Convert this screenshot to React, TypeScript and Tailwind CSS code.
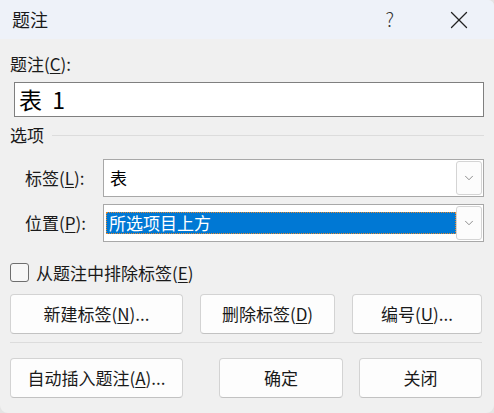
import { ChevronDown, X } from "lucide-react"

const font = { fontFamily: '"Noto Sans CJK SC", "Noto Sans", sans-serif' }

function Btn({ children, className }: { children: React.ReactNode; className: string }) {
    return (
        <button className={`h-[40px] flex items-center justify-center bg-[#fdfdfd] border border-[#d3d3d3] border-b-[#c2c2c2] rounded-[4px] text-[17px] text-[#1a1a1a] ${className}`}>
            {children}
        </button>
    )
}

function Combo({ value, selected }: { value: string; selected?: boolean }) {
    return (
        <div className="w-[381px] h-[38px] bg-white border border-[#a8a8a8] flex items-stretch p-[1px]">
            <div className="flex-1 flex items-center py-[6px] pl-[1px]">
                {selected ? (
                    <div className="w-full h-full bg-[#0078d4] text-white text-[17px] flex items-center pl-[3px] outline-1 outline-dotted outline-[#e88a2c] -outline-offset-1">
                        {value}
                    </div>
                ) : (
                    <span className="pl-[4px] text-[17px] text-black">{value}</span>
                )}
            </div>
            <div className="w-[26px] border border-[#d4d4d4] rounded-[3px] bg-[#fcfcfc] flex items-center justify-center">
                <ChevronDown className="w-[14px] h-[14px] text-[#6b6b6b]" strokeWidth={1.3} />
            </div>
        </div>
    )
}

export default function App() {
    return (
        <div className="w-[494px] h-[413px] bg-[#e4e4e4]" style={font}>
            <div className="w-full h-full rounded-b-[8px] rounded-tr-[6px] overflow-hidden bg-[#f0f0f0] flex flex-col">
                {/* title bar */}
                <div className="h-[39px] bg-[#eef2f9] flex items-center pl-[12px] shrink-0">
                    <span className="text-[18px] text-[#1a1a1a]">题注</span>
                    <span className="ml-auto mr-[50px] text-[19px] font-light text-[#333]">?</span>
                    <X className="w-[30px] h-[30px] mr-[20px] text-[#222]" strokeWidth={1} />
                </div>

                <div className="px-[10px]">
                    <div className="mt-[14px] h-[22px] flex items-center text-[17px] text-[#1a1a1a]">
                        题注(<span className="underline underline-offset-2">C</span>):
                    </div>
                    <div className="mt-[7px] ml-[4px] w-[470px] h-[35px] bg-white border border-[#7f7f7f] flex items-center pl-[4px] text-[23px] text-black">
                        表&nbsp;&nbsp;1
                    </div>

                    <div className="mt-[7px] h-[22px] flex items-center gap-[8px]">
                        <span className="text-[17px] text-[#1a1a1a]">选项</span>
                        <div className="flex-1 h-px bg-[#dcdcdc]" />
                    </div>

                    <div className="mt-[13px] flex items-center">
                        <span className="w-[93px] pl-[15px] text-[17px] text-[#1a1a1a]">
                            标签(<span className="underline underline-offset-2">L</span>):
                        </span>
                        <Combo value="表" />
                    </div>
                    <div className="mt-[7px] flex items-center">
                        <span className="w-[93px] pl-[15px] text-[17px] text-[#1a1a1a]">
                            位置(<span className="underline underline-offset-2">P</span>):
                        </span>
                        <Combo value="所选项目上方" selected />
                    </div>

                    <div className="mt-[21px] h-[19px] flex items-center">
                        <div className="w-[19px] h-[19px] border border-[#6e6e6e] rounded-[3px] bg-[#f7f7f7]" />
                        <span className="ml-[7px] text-[17px] text-[#1a1a1a]">
                            从题注中排除标签(<span className="underline underline-offset-2">E</span>)
                        </span>
                    </div>

                    <div className="mt-[12px] flex">
                        <Btn className="w-[173px]">新建标签(<span className="underline underline-offset-2">N</span>)...</Btn>
                        <Btn className="w-[135px] ml-[17px]">删除标签(<span className="underline underline-offset-2">D</span>)</Btn>
                        <Btn className="w-[130px] ml-[17px]">编号(<span className="underline underline-offset-2">U</span>)...</Btn>
                    </div>

                    <div className="mt-[8px] w-[472px] h-px bg-[#dcdcdc]" />

                    <div className="mt-[15px] flex">
                        <Btn className="w-[173px]">自动插入题注(<span className="underline underline-offset-2">A</span>)...</Btn>
                        <Btn className="w-[124px] ml-[36px]">确定</Btn>
                        <Btn className="w-[123px] ml-[16px]">关闭</Btn>
                    </div>
                </div>
            </div>
        </div>
    )
}
